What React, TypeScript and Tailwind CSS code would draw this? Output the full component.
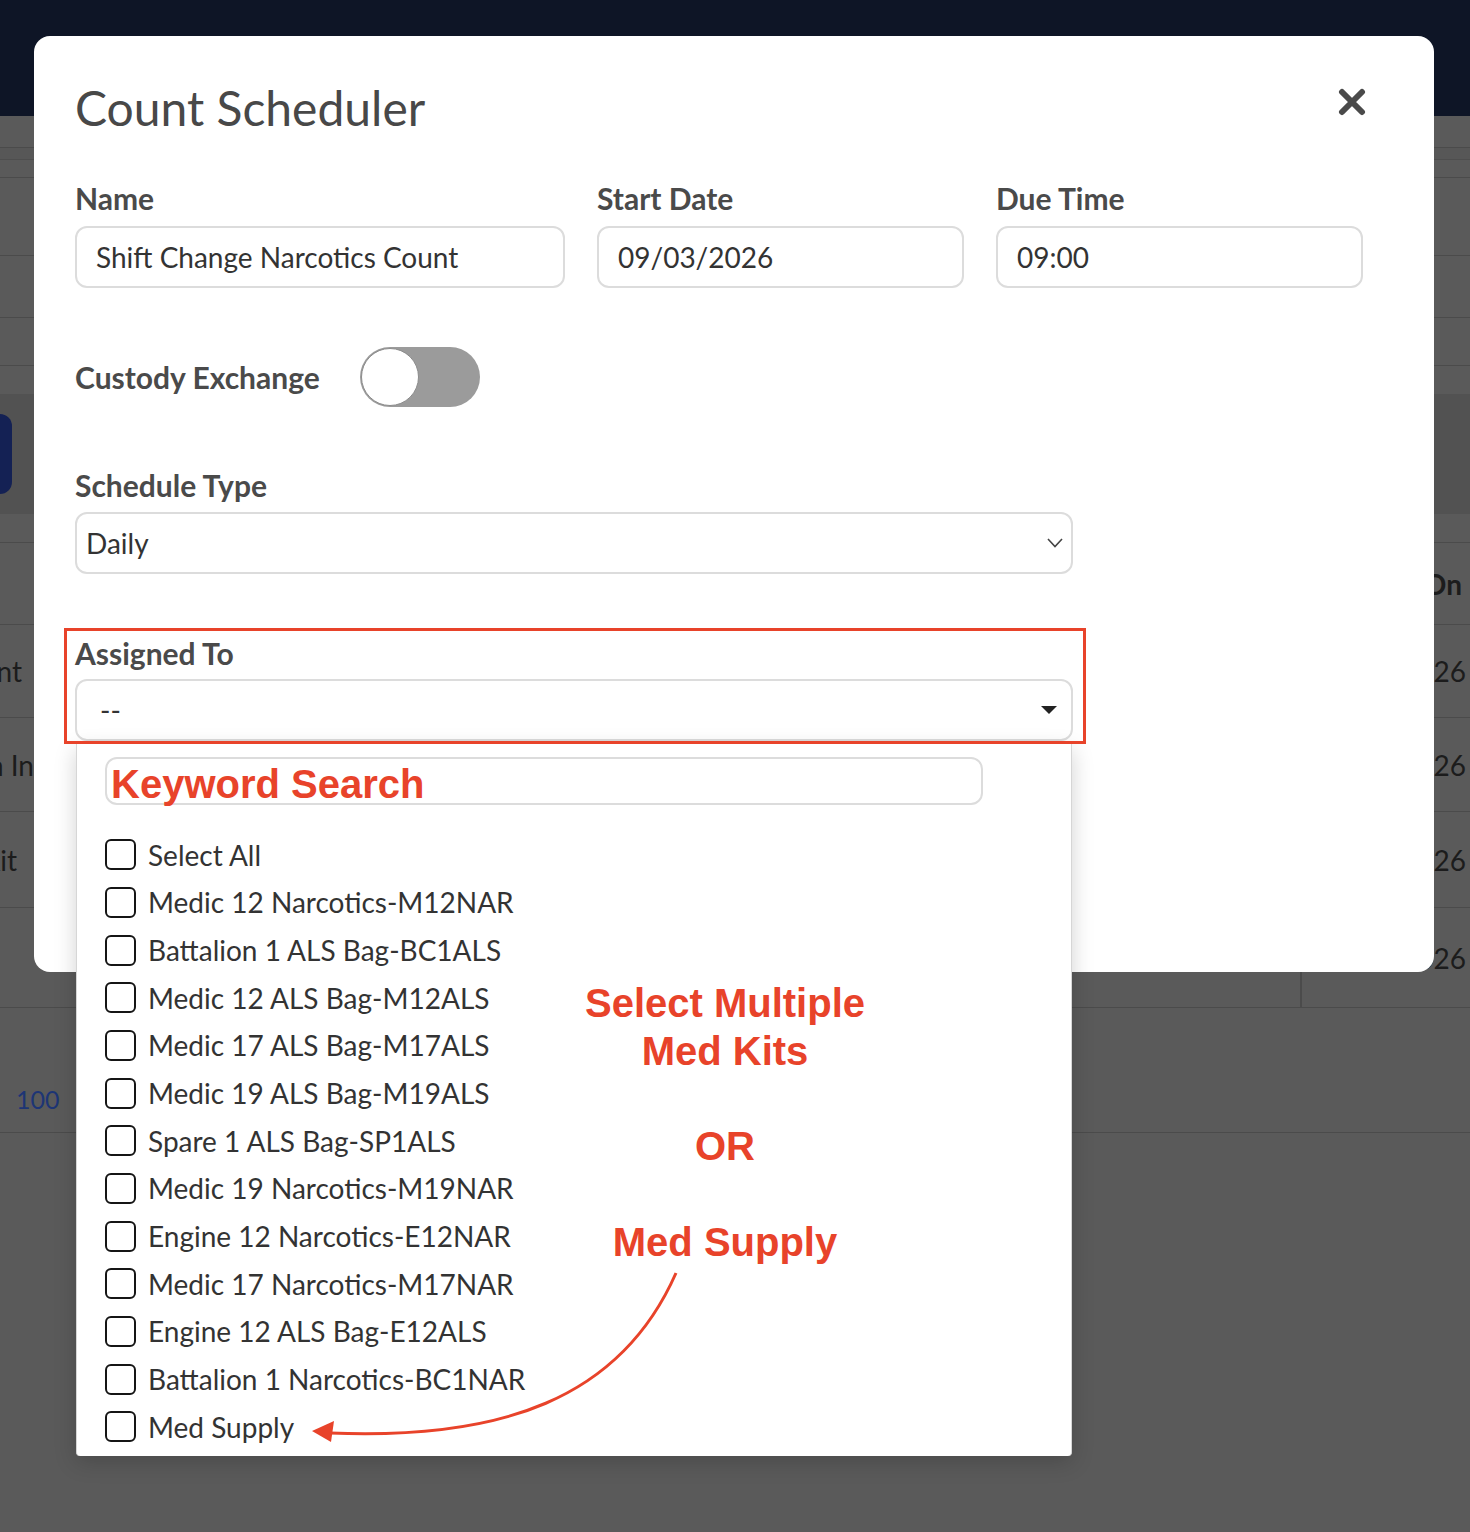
import React from "react";

const kits = [
  "Select All",
  "Medic 12 Narcotics-M12NAR",
  "Battalion 1 ALS Bag-BC1ALS",
  "Medic 12 ALS Bag-M12ALS",
  "Medic 17 ALS Bag-M17ALS",
  "Medic 19 ALS Bag-M19ALS",
  "Spare 1 ALS Bag-SP1ALS",
  "Medic 19 Narcotics-M19NAR",
  "Engine 12 Narcotics-E12NAR",
  "Medic 17 Narcotics-M17NAR",
  "Engine 12 ALS Bag-E12ALS",
  "Battalion 1 Narcotics-BC1NAR",
  "Med Supply",
];

const lato = { fontFamily: "Lato, 'Open Sans', sans-serif" };
const helv = { fontFamily: "'Liberation Sans', Arial, sans-serif" };

function PageBehind() {
  return (
    <div className="flex flex-col" style={lato}>
      <div className="h-[116px] bg-[#0e1526]" />
      <div className="h-[32px] border-b border-[#4b4b4b]" />
      <div className="h-[12px] border-b border-[#4e4e4e] bg-[#575757]" />
      <div className="h-[18px] border-b border-[#4b4b4b]" />
      <div className="h-[78px] border-b border-[#4b4b4b]" />
      <div className="h-[62px] border-b border-[#4b4b4b]" />
      <div className="h-[48px] border-b border-[#4b4b4b]" />
      <div className="h-[28px]" />
      <div className="h-[120px] bg-[#525252] flex items-center">
        <div className="w-[12px] h-[80px] rounded-r-[12px] bg-[#142154]" />
      </div>
      <div className="h-[29px] border-b border-[#4b4b4b]" />
      <div className="h-[82px] border-b border-[#4b4b4b] flex items-center justify-end pr-[8px]">
        <span className="text-[28px] font-bold text-[#1c1c1c]">Due On</span>
      </div>
      {[
        { h: "h-[93px]", left: "Count", pad: "pr-[12px]" },
        { h: "h-[94px]", left: "Main In", pad: "pr-0" },
        { h: "h-[96px]", left: "Kit", pad: "pr-[17px]" },
      ].map((r, i) => (
        <div
          key={i}
          className={`${r.h} border-b border-[#4b4b4b] flex items-center justify-between`}
        >
          <div className="w-[34px] overflow-hidden flex justify-end">
            <span className={`shrink-0 whitespace-nowrap text-[28px] text-[#1c1c1c] ${r.pad}`}>
              {r.left}
            </span>
          </div>
          <span className="text-[28px] text-[#1c1c1c] pr-[4px]">09/03/2026</span>
        </div>
      ))}
      <div className="h-[100px] border-b border-[#4b4b4b] flex">
        <div className="flex-1" />
        <div className="w-[170px] border-l-2 border-[#4b4b4b] flex items-center justify-end pr-[4px]">
          <span className="text-[28px] text-[#1c1c1c]">09/03/2026</span>
        </div>
      </div>
      <div className="h-[125px] border-b border-[#4b4b4b] flex items-end pb-[14px] pl-[16px]">
        <span className="text-[25px] text-[#1d3575]">100</span>
      </div>
    </div>
  );
}

function Field({ label, value }: { label: string; value: string }) {
  return (
    <div>
      <div className="text-[30px] font-bold leading-[34px] text-[#4a4a4a]">{label}</div>
      <div className="mt-[11px] h-[62px] rounded-[12px] border-2 border-[#dcdcdc] px-[19px] flex items-center text-[28px] text-[#333]">
        {value}
      </div>
    </div>
  );
}

function Checkbox() {
  return <span className="w-[31px] h-[31px] shrink-0 rounded-[6px] border-2 border-[#151515] bg-white" />;
}

function Dropdown() {
  return (
    <div className="absolute left-[1px] top-[65px] w-[996px] bg-white border-x border-[#d6d6d6] rounded-b-[4px] shadow-[0_6px_22px_rgba(0,0,0,0.18)] pt-[13px] pb-[5px]">
      <div className="ml-[28px] w-[878px] h-[48px] rounded-[12px] border-2 border-[#dcdcdc] flex items-center pl-[4px] pt-[6px]">
        <span className="text-[40px] font-bold text-[#e8432a] leading-none" style={helv}>
          Keyword Search
        </span>
      </div>
      <ul className="mt-[26px] pl-[28px]">
        {kits.map((k) => (
          <li key={k} className="h-[47.67px] flex items-center gap-[12px]">
            <Checkbox />
            <span className="text-[28px] text-[#333] whitespace-nowrap">{k}</span>
          </li>
        ))}
      </ul>
    </div>
  );
}

function Modal() {
  return (
    <div
      className="absolute z-10 left-[34px] top-[36px] w-[1400px] h-[936px] rounded-[16px] bg-white pl-[41px] pr-[71px] pt-[44px]"
      style={lato}
    >
      <div className="flex items-start justify-between">
        <h1 className="text-[48px] leading-[56px] text-[#484848]">Count Scheduler</h1>
        <button className="mt-[8px] -mr-[3px]" aria-label="Close">
          <svg width="28" height="28" viewBox="0 0 28 28">
            <path d="M4 4 L24 24 M24 4 L4 24" stroke="#4a4a4a" strokeWidth="6" strokeLinecap="round" />
          </svg>
        </button>
      </div>

      <div className="mt-[45px] grid grid-cols-[490px_367px_367px] gap-x-[32px]">
        <Field label="Name" value="Shift Change Narcotics Count" />
        <Field label="Start Date" value="09/03/2026" />
        <Field label="Due Time" value="09:00" />
      </div>

      <div className="mt-[59px] flex items-center gap-[40px]">
        <span className="text-[30px] font-bold text-[#4a4a4a]">Custody Exchange</span>
        <div className="w-[120px] h-[60px] rounded-full bg-[#9b9b9b] p-[1px] flex items-center">
          <span className="w-[58px] h-[58px] rounded-full bg-white border border-[#8c8c8c]" />
        </div>
      </div>

      <div className="mt-[61px] w-[998px]">
        <div className="text-[30px] font-bold leading-[34px] text-[#4a4a4a]">Schedule Type</div>
        <div className="mt-[10px] h-[62px] rounded-[12px] border-2 border-[#dcdcdc] pl-[9px] pr-[8px] flex items-center justify-between text-[28px] text-[#333]">
          <span>Daily</span>
          <svg width="16" height="10" viewBox="0 0 16 10">
            <polyline points="1,1 8,8.5 15,1" fill="none" stroke="#444" strokeWidth="1.6" />
          </svg>
        </div>
      </div>

      <div className="mt-[62px] w-[998px] relative">
        <div className="text-[30px] font-bold leading-[34px] text-[#4a4a4a]">Assigned To</div>
        <div className="mt-[9px] h-[62px] rounded-[12px] border-2 border-[#dcdcdc] pl-[23px] pr-[14px] flex items-center justify-between text-[28px] text-[#333]">
          <span>--</span>
          <svg width="16" height="9" viewBox="0 0 16 9">
            <polygon points="0,0 16,0 8,8" fill="#222" />
          </svg>
        </div>
        <div className="absolute left-0 right-0 top-[43px]">
          <Dropdown />
        </div>
        <div className="absolute -left-[11px] -top-[8px] -right-[13px] -bottom-[3px] border-[3px] border-[#e8432a] pointer-events-none" />
      </div>
    </div>
  );
}

function Notes() {
  return (
    <div className="absolute inset-0 z-20 pointer-events-none">
      <div
        className="absolute left-[525px] top-[979px] w-[400px] text-center text-[40px] font-bold leading-[48px] text-[#e8432a]"
        style={helv}
      >
        <div>Select Multiple</div>
        <div>Med Kits</div>
        <div className="mt-[47px]">OR</div>
        <div className="mt-[48px]">Med Supply</div>
      </div>
      <svg className="absolute left-0 top-0" width="1470" height="1532">
        <path
          d="M676 1273 C 620 1400, 500 1440, 330 1433"
          fill="none"
          stroke="#e8432a"
          strokeWidth="3"
        />
        <polygon points="312,1431 334,1421 331,1442" fill="#e8432a" />
      </svg>
    </div>
  );
}

export default function App() {
  return (
    <div className="relative w-[1470px] h-[1532px] overflow-hidden bg-[#5a5a5a]">
      <PageBehind />
      <Modal />
      <Notes />
    </div>
  );
}
